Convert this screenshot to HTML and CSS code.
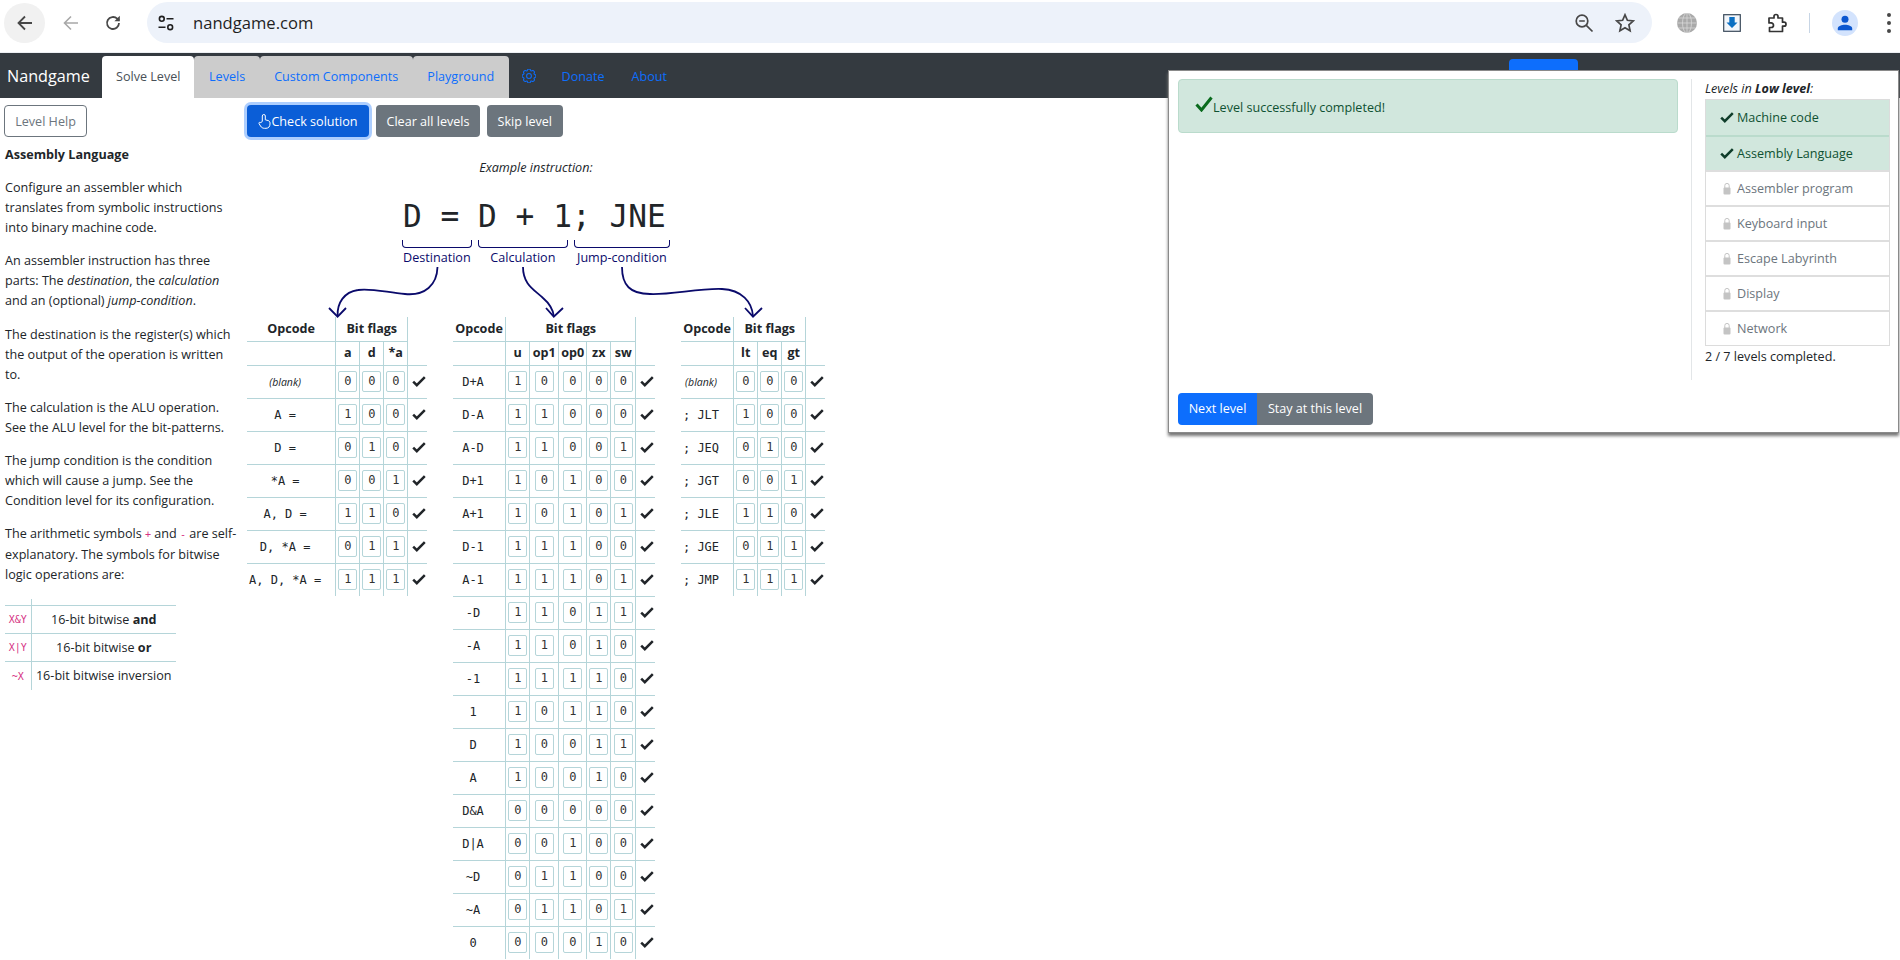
FILE: index.html
```html
<!DOCTYPE html>
<html lang="en">
<head>
    <meta charset="UTF-8">
    <title>Nandgame</title>
    <link rel="stylesheet" href="styles.css">
</head>
<body>
    <svg class="defs" width="0" height="0">
        <symbol id="tick" viewBox="0 0 14 11"><path d="M1.200 5.600 4.800 9.200 12.800 1.200" fill="none" stroke="currentColor" stroke-width="2.500"/></symbol>
        <symbol id="lock" viewBox="0 0 8 13"><path d="M1.800 6V3.600a2.200 2.200 0 0 1 4.400 0V6" fill="none" stroke="currentColor" stroke-width="1"/><rect x="0.500" y="5.500" width="7" height="7" rx="1" fill="currentColor"/></symbol>
    </svg>

    <!-- browser toolbar -->
    <div class="toolbar">
        <button class="round back"><svg width="18" height="18" viewBox="0 0 18 18"><path d="M16 9H3M9 2.500 2.500 9 9 15.500" fill="none" stroke="#474747" stroke-width="1.800"/></svg></button>
        <span class="round"><svg width="18" height="18" viewBox="0 0 18 18"><path d="M16 9H3M9 2.500 2.500 9 9 15.500" fill="none" stroke="#a8a8a8" stroke-width="1.600"/></svg></span>
        <span class="round reload"><svg width="18" height="18" viewBox="0 0 18 18"><path d="M15 9a6 6 0 1 1-1.800-4.300L15 6.500" fill="none" stroke="#474747" stroke-width="1.800"/><path d="M15.800 1.800V7.200H10.400Z" fill="#474747"/></svg></span>
        <div class="omnibox">
            <svg class="tune" width="18" height="18" viewBox="0 0 18 18"><g fill="none" stroke="#1f1f1f" stroke-width="1.600"><circle cx="4.800" cy="4.800" r="2.400"/><circle cx="13.200" cy="13.200" r="2.400"/><path d="M9.500 4.800H16.500M1.500 13.200H8.500"/></g></svg>
            <span class="url">nandgame.com</span>
            <svg class="omni-icon first" width="20" height="20" viewBox="0 0 20 20"><g fill="none" stroke="#474747" stroke-width="1.700"><circle cx="8" cy="8" r="5.800"/><path d="M12.300 12.300 18.500 18.500M5.200 8H10.800"/></g></svg>
            <svg class="omni-icon" width="20" height="20" viewBox="0 0 20 20"><path d="M10 1.800 12.400 7.300 18.300 7.900 13.900 11.900 15.100 17.800 10 14.800 4.900 17.800 6.100 11.900 1.700 7.900 7.600 7.300Z" fill="none" stroke="#474747" stroke-width="1.700"/></svg>
        </div>
        <svg class="ext globe" width="20" height="20" viewBox="0 0 20 20"><circle cx="10" cy="10" r="10" fill="#a9a9a9"/><g fill="none" stroke="#d8d8d8" stroke-width="0.800"><ellipse cx="10" cy="10" rx="4.500" ry="10"/><path d="M0 10H20M1.500 5H18.500M1.500 15H18.500M10 0V20"/></g></svg>
        <svg class="ext" width="18" height="18" viewBox="0 0 18 18"><rect x="0.700" y="0.700" width="16.600" height="16.600" fill="#f2f6fb" stroke="#3a4a5a" stroke-width="1.200"/><path d="M6.300 3H11.700V8.500H14.500L9 14 3.500 8.500H6.300Z" fill="#0b6fc2"/></svg>
        <svg class="ext" width="20" height="20" viewBox="0 0 20 20"><path d="M2 5H7V3.500a2 2 0 0 1 4 0V5H15.500V9.200H17a2 2 0 0 1 0 4H15.500V18.500H2.500V14.500H4.200a2.300 2.300 0 0 0 0-4.600H2Z" fill="none" stroke="#333" stroke-width="1.700" stroke-linejoin="round"/></svg>
        <span class="sep"></span>
        <span class="avatar"><svg width="16" height="16" viewBox="0 0 16 16"><circle cx="8" cy="4.300" r="3.500" fill="#0b57d0"/><path d="M0.800 15.200V13.500C0.800 10.800 5 9.700 8 9.700S15.200 10.800 15.200 13.500V15.200Z" fill="#0b57d0"/></svg></span>
        <span class="dots"><i></i><i></i><i></i></span>
    </div>

    <nav class="topnav">
        <span class="brand">Nandgame</span>
        <div class="tabs">
            <a class="tab active">Solve Level</a>
            <a class="tab">Levels</a>
            <a class="tab">Custom Components</a>
            <a class="tab">Playground</a>
        </div>
        <a class="gear"><svg width="14" height="14" viewBox="0 0 16 16"><g fill="none" stroke="#0d6efd" stroke-width="1.200"><circle cx="8" cy="8" r="2.750"/><path d="M9.796 1.343c-.527-1.790-3.065-1.790-3.592 0l-.094.319a.873.873 0 0 1-1.255.52l-.292-.16c-1.640-.892-3.433.902-2.540 2.541l.159.292a.873.873 0 0 1-.52 1.255l-.319.094c-1.790.527-1.790 3.065 0 3.592l.319.094a.873.873 0 0 1 .52 1.255l-.16.292c-.892 1.640.901 3.434 2.541 2.540l.292-.159a.873.873 0 0 1 1.255.52l.094.319c.527 1.790 3.065 1.790 3.592 0l.094-.319a.873.873 0 0 1 1.255-.52l.292.16c1.640.893 3.434-.902 2.540-2.541l-.159-.292a.873.873 0 0 1 .52-1.255l.319-.094c1.790-.527 1.790-3.065 0-3.592l-.319-.094a.873.873 0 0 1-.52-1.255l.16-.292c.893-1.640-.902-3.433-2.541-2.540l-.292.159a.873.873 0 0 1-1.255-.52z"/></g></svg></a>
        <a class="navlink">Donate</a>
        <a class="navlink">About</a>
        <span class="nav-blue"></span>
    </nav>

    <main class="page">
        <aside class="help">
            <button class="btn btn-outline">Level Help</button>
            <h1>Assembly Language</h1>
            <p>Configure an assembler which translates from symbolic instructions into binary machine code.</p>
            <p>An assembler instruction has three parts: The <em>destination</em>, the <em>calculation</em> and an (optional) <em>jump-condition</em>.</p>
            <p>The destination is the register(s) which the output of the operation is written to.</p>
            <p>The calculation is the ALU operation. See the ALU level for the bit-patterns.</p>
            <p>The jump condition is the condition which will cause a jump. See the Condition level for its configuration.</p>
            <p>The arithmetic symbols <code class="sym">+</code> and <code class="sym">-</code> are self-explanatory. The symbols for bitwise logic operations are:</p>
            <table class="symbols">
                <tr class="spacer"><td></td><td></td></tr>
                <tr><td><code>X&amp;Y</code></td><td>16-bit bitwise <b>and</b></td></tr>
                <tr><td><code>X|Y</code></td><td>16-bit bitwise <b>or</b></td></tr>
                <tr><td><code>~X</code></td><td>16-bit bitwise inversion</td></tr>
            </table>
        </aside>

        <section class="work">
            <div class="actions">
                <button class="btn btn-primary"><svg width="13" height="16" viewBox="0 0 13 16"><path d="M4.300 8.500V3a1.500 1.500 0 0 1 3 0V6.800L10 7.500C11.300 7.900 12 8.700 12 10V11C12 13.500 10.500 15.300 8 15.300H6.500C4.500 15.300 3.500 14.500 2.500 13L1 10.500C.6 9.600 1.800 8.700 2.800 9.600Z" fill="none" stroke="#fff" stroke-width="1"/></svg>Check solution</button>
                <button class="btn btn-gray">Clear all levels</button>
                <button class="btn btn-gray">Skip level</button>
            </div>

            <div class="example">
                <p class="example-title">Example instruction:</p>
                <code class="instruction">D = D + 1; JNE</code>
                <div class="parts">
                    <div class="part dest"><div class="brace"></div>Destination</div>
                    <div class="part calc"><div class="brace"></div>Calculation</div>
                    <div class="part jump"><div class="brace"></div>Jump-condition</div>
                </div>
                <svg class="arrows" width="580" height="182" viewBox="247 137 580 182">
                    <g fill="none" stroke="#0a0a6b" stroke-width="1.800">
                        <path d="M437.500 267C437 285 425 296 405 294C385 292 370 288 358 290C344 292 337 303 337.600 316"/>
                        <path d="M329 308 337.600 316.700 346 308"/>
                        <path d="M523 267C523 285 535 290 543 298C550 304 553 310 553.800 316"/>
                        <path d="M546 308 553.800 316.700 563 308"/>
                        <path d="M622 267C622 285 630 294 650 294C670 295 700 288 722 289C742 290 752 302 753 316"/>
                        <path d="M745 308 753 316.700 762 308"/>
                    </g>
                </svg>
            </div>

            <div class="tables">
                <table class="bits">
                    <tr class="head"><th>Opcode</th><th colspan="3">Bit flags</th><td class="chk"></td></tr>
                    <tr class="sub"><td class="op"></td><th>a</th><th>d</th><th>*a</th><td class="chk"></td></tr>
                    <tr><td class="op blank">(blank)</td><td><span class="bit">0</span></td><td><span class="bit">0</span></td><td><span class="bit">0</span></td><td class="chk"><svg><use href="#tick"/></svg></td></tr>
                    <tr><td class="op">A =</td><td><span class="bit">1</span></td><td><span class="bit">0</span></td><td><span class="bit">0</span></td><td class="chk"><svg><use href="#tick"/></svg></td></tr>
                    <tr><td class="op">D =</td><td><span class="bit">0</span></td><td><span class="bit">1</span></td><td><span class="bit">0</span></td><td class="chk"><svg><use href="#tick"/></svg></td></tr>
                    <tr><td class="op">*A =</td><td><span class="bit">0</span></td><td><span class="bit">0</span></td><td><span class="bit">1</span></td><td class="chk"><svg><use href="#tick"/></svg></td></tr>
                    <tr><td class="op">A, D =</td><td><span class="bit">1</span></td><td><span class="bit">1</span></td><td><span class="bit">0</span></td><td class="chk"><svg><use href="#tick"/></svg></td></tr>
                    <tr><td class="op">D, *A =</td><td><span class="bit">0</span></td><td><span class="bit">1</span></td><td><span class="bit">1</span></td><td class="chk"><svg><use href="#tick"/></svg></td></tr>
                    <tr><td class="op">A, D, *A =</td><td><span class="bit">1</span></td><td><span class="bit">1</span></td><td><span class="bit">1</span></td><td class="chk"><svg><use href="#tick"/></svg></td></tr>
                </table>

                <table class="bits alu">
                    <tr class="head"><th>Opcode</th><th colspan="5">Bit flags</th><td class="chk"></td></tr>
                    <tr class="sub"><td class="op"></td><th>u</th><th>op1</th><th>op0</th><th>zx</th><th>sw</th><td class="chk"></td></tr>
                    <tr><td class="op">D+A</td><td><span class="bit">1</span></td><td><span class="bit">0</span></td><td><span class="bit">0</span></td><td><span class="bit">0</span></td><td><span class="bit">0</span></td><td class="chk"><svg><use href="#tick"/></svg></td></tr>
                    <tr><td class="op">D-A</td><td><span class="bit">1</span></td><td><span class="bit">1</span></td><td><span class="bit">0</span></td><td><span class="bit">0</span></td><td><span class="bit">0</span></td><td class="chk"><svg><use href="#tick"/></svg></td></tr>
                    <tr><td class="op">A-D</td><td><span class="bit">1</span></td><td><span class="bit">1</span></td><td><span class="bit">0</span></td><td><span class="bit">0</span></td><td><span class="bit">1</span></td><td class="chk"><svg><use href="#tick"/></svg></td></tr>
                    <tr><td class="op">D+1</td><td><span class="bit">1</span></td><td><span class="bit">0</span></td><td><span class="bit">1</span></td><td><span class="bit">0</span></td><td><span class="bit">0</span></td><td class="chk"><svg><use href="#tick"/></svg></td></tr>
                    <tr><td class="op">A+1</td><td><span class="bit">1</span></td><td><span class="bit">0</span></td><td><span class="bit">1</span></td><td><span class="bit">0</span></td><td><span class="bit">1</span></td><td class="chk"><svg><use href="#tick"/></svg></td></tr>
                    <tr><td class="op">D-1</td><td><span class="bit">1</span></td><td><span class="bit">1</span></td><td><span class="bit">1</span></td><td><span class="bit">0</span></td><td><span class="bit">0</span></td><td class="chk"><svg><use href="#tick"/></svg></td></tr>
                    <tr><td class="op">A-1</td><td><span class="bit">1</span></td><td><span class="bit">1</span></td><td><span class="bit">1</span></td><td><span class="bit">0</span></td><td><span class="bit">1</span></td><td class="chk"><svg><use href="#tick"/></svg></td></tr>
                    <tr><td class="op">-D</td><td><span class="bit">1</span></td><td><span class="bit">1</span></td><td><span class="bit">0</span></td><td><span class="bit">1</span></td><td><span class="bit">1</span></td><td class="chk"><svg><use href="#tick"/></svg></td></tr>
                    <tr><td class="op">-A</td><td><span class="bit">1</span></td><td><span class="bit">1</span></td><td><span class="bit">0</span></td><td><span class="bit">1</span></td><td><span class="bit">0</span></td><td class="chk"><svg><use href="#tick"/></svg></td></tr>
                    <tr><td class="op">-1</td><td><span class="bit">1</span></td><td><span class="bit">1</span></td><td><span class="bit">1</span></td><td><span class="bit">1</span></td><td><span class="bit">0</span></td><td class="chk"><svg><use href="#tick"/></svg></td></tr>
                    <tr><td class="op">1</td><td><span class="bit">1</span></td><td><span class="bit">0</span></td><td><span class="bit">1</span></td><td><span class="bit">1</span></td><td><span class="bit">0</span></td><td class="chk"><svg><use href="#tick"/></svg></td></tr>
                    <tr><td class="op">D</td><td><span class="bit">1</span></td><td><span class="bit">0</span></td><td><span class="bit">0</span></td><td><span class="bit">1</span></td><td><span class="bit">1</span></td><td class="chk"><svg><use href="#tick"/></svg></td></tr>
                    <tr><td class="op">A</td><td><span class="bit">1</span></td><td><span class="bit">0</span></td><td><span class="bit">0</span></td><td><span class="bit">1</span></td><td><span class="bit">0</span></td><td class="chk"><svg><use href="#tick"/></svg></td></tr>
                    <tr><td class="op">D&amp;A</td><td><span class="bit">0</span></td><td><span class="bit">0</span></td><td><span class="bit">0</span></td><td><span class="bit">0</span></td><td><span class="bit">0</span></td><td class="chk"><svg><use href="#tick"/></svg></td></tr>
                    <tr><td class="op">D|A</td><td><span class="bit">0</span></td><td><span class="bit">0</span></td><td><span class="bit">1</span></td><td><span class="bit">0</span></td><td><span class="bit">0</span></td><td class="chk"><svg><use href="#tick"/></svg></td></tr>
                    <tr><td class="op">~D</td><td><span class="bit">0</span></td><td><span class="bit">1</span></td><td><span class="bit">1</span></td><td><span class="bit">0</span></td><td><span class="bit">0</span></td><td class="chk"><svg><use href="#tick"/></svg></td></tr>
                    <tr><td class="op">~A</td><td><span class="bit">0</span></td><td><span class="bit">1</span></td><td><span class="bit">1</span></td><td><span class="bit">0</span></td><td><span class="bit">1</span></td><td class="chk"><svg><use href="#tick"/></svg></td></tr>
                    <tr><td class="op">0</td><td><span class="bit">0</span></td><td><span class="bit">0</span></td><td><span class="bit">0</span></td><td><span class="bit">1</span></td><td><span class="bit">0</span></td><td class="chk"><svg><use href="#tick"/></svg></td></tr>
                </table>

                <table class="bits">
                    <tr class="head"><th>Opcode</th><th colspan="3">Bit flags</th><td class="chk"></td></tr>
                    <tr class="sub"><td class="op"></td><th>lt</th><th>eq</th><th>gt</th><td class="chk"></td></tr>
                    <tr><td class="op blank">(blank)</td><td><span class="bit">0</span></td><td><span class="bit">0</span></td><td><span class="bit">0</span></td><td class="chk"><svg><use href="#tick"/></svg></td></tr>
                    <tr><td class="op">; JLT</td><td><span class="bit">1</span></td><td><span class="bit">0</span></td><td><span class="bit">0</span></td><td class="chk"><svg><use href="#tick"/></svg></td></tr>
                    <tr><td class="op">; JEQ</td><td><span class="bit">0</span></td><td><span class="bit">1</span></td><td><span class="bit">0</span></td><td class="chk"><svg><use href="#tick"/></svg></td></tr>
                    <tr><td class="op">; JGT</td><td><span class="bit">0</span></td><td><span class="bit">0</span></td><td><span class="bit">1</span></td><td class="chk"><svg><use href="#tick"/></svg></td></tr>
                    <tr><td class="op">; JLE</td><td><span class="bit">1</span></td><td><span class="bit">1</span></td><td><span class="bit">0</span></td><td class="chk"><svg><use href="#tick"/></svg></td></tr>
                    <tr><td class="op">; JGE</td><td><span class="bit">0</span></td><td><span class="bit">1</span></td><td><span class="bit">1</span></td><td class="chk"><svg><use href="#tick"/></svg></td></tr>
                    <tr><td class="op">; JMP</td><td><span class="bit">1</span></td><td><span class="bit">1</span></td><td><span class="bit">1</span></td><td class="chk"><svg><use href="#tick"/></svg></td></tr>
                </table>
            </div>
        </section>
    </main>

    <!-- popup shown after the level is solved -->
    <div class="popup">
        <div class="popup-body">
            <div class="popup-main">
                <div class="alert"><svg width="18" height="16" viewBox="0 0 18 16"><path d="M1.500 8.500 6.500 14 16.500 1.500" fill="none" stroke="#0a6b1d" stroke-width="3"/></svg>Level successfully completed!</div>
                <div class="choices">
                    <button class="btn btn-next">Next level</button><button class="btn btn-stay">Stay at this level</button>
                </div>
            </div>
            <div class="popup-side">
                <div class="side-inner">
                    <div class="side-title"><em>Levels in <b>Low level</b>:</em></div>
                    <ul class="levels">
                        <li class="done"><svg class="ico-tick"><use href="#tick"/></svg>Machine code</li>
                        <li class="done"><svg class="ico-tick"><use href="#tick"/></svg>Assembly Language</li>
                        <li><svg class="ico-lock"><use href="#lock"/></svg>Assembler program</li>
                        <li><svg class="ico-lock"><use href="#lock"/></svg>Keyboard input</li>
                        <li><svg class="ico-lock"><use href="#lock"/></svg>Escape Labyrinth</li>
                        <li><svg class="ico-lock"><use href="#lock"/></svg>Display</li>
                        <li><svg class="ico-lock"><use href="#lock"/></svg>Network</li>
                    </ul>
                    <div class="progress">2 / 7 levels completed.</div>
                </div>
            </div>
        </div>
    </div>
</body>
</html>
```

FILE: styles.css
```css
* {
    box-sizing: border-box;
}

html, body {
    height: 960px;
    overflow: hidden;
}

body {
    margin: 0;
    background-color: white;
    color: #212529;
    font-family: "Open Sans", "Noto Sans", sans-serif;
    font-size: 12.6px;
    line-height: 20px;
    position: relative;
}

.defs {
    position: absolute;
}

code {
    font-family: "DejaVu Sans Mono", monospace;
}

/* browser toolbar */
.toolbar {
    height: 53px;
    display: flex;
    align-items: center;
    padding: 0 0 7px 4px;
    border-bottom: 1px solid #eceff3;
}

.round {
    width: 41px;
    height: 40px;
    margin-right: 5px;
    display: flex;
    align-items: center;
    justify-content: center;
    border: none;
    border-radius: 50%;
    background: transparent;
    padding: 0;
}

.back {
    background: #f1f1f1;
}

.reload {
    margin-left: -4px;
}

.omnibox {
    width: 1505px;
    height: 41px;
    margin-left: 9px;
    display: flex;
    align-items: center;
    padding: 0 17px 0 10px;
    border-radius: 21px;
    background: #edf2fa;
}

.tune {
    margin-right: 18px;
}

.url {
    font-size: 16.600px;
    color: #1f1f1f;
    flex: 1;
}

.omni-icon {
    margin-left: 21px;
}

.ext {
    margin-left: 26px;
    flex: none;
}

.globe {
    margin-left: 25px;
}

.sep {
    width: 1px;
    height: 20px;
    margin-left: 22px;
    background: #c7d5e5;
}

.avatar {
    width: 26px;
    height: 26px;
    margin-left: 22px;
    display: flex;
    align-items: center;
    justify-content: center;
    border-radius: 50%;
    background: #d3e3fd;
}

.dots {
    margin-left: 29px;
    display: flex;
    flex-direction: column;
    gap: 4px;
}

.dots i {
    width: 4px;
    height: 4px;
    border-radius: 50%;
    background: #474747;
}

/* site navigation */
.topnav {
    height: 45px;
    display: flex;
    align-items: flex-end;
    background: #343a40;
    position: relative;
}

.brand {
    width: 102px;
    padding-left: 7px;
    align-self: center;
    color: white;
    font-size: 16.200px;
}

.tabs {
    display: flex;
    height: 42px;
}

.tab {
    height: 42px;
    padding: 0 14.500px;
    display: flex;
    align-items: center;
    background: #cccccc;
    color: #0d6efd;
    border-radius: 4px 4px 0 0;
}

.tab.active {
    background: white;
    color: #495057;
    padding: 0 14px;
}

.gear {
    margin-left: 13px;
    align-self: center;
    height: 14px;
    line-height: 0;
    margin-top: 1px;
}

.navlink {
    align-self: center;
    padding: 0 13.500px;
    color: #0d6efd;
    margin-top: 2px;
}

.gear + .navlink {
    margin-left: 13px;
    padding-left: 13px;
}

.nav-blue {
    position: absolute;
    left: 1509px;
    top: 6px;
    width: 69px;
    height: 14px;
    border-radius: 4px 4px 0 0;
    background: #0d6efd;
}

/* page body */
.page {
    display: flex;
    padding: 7px 0 0 5px;
    height: 862px;
}

.help {
    width: 242px;
    flex: none;
    padding-right: 8px;
}

.help h1 {
    margin: 8px 0 13px;
    font-size: 12.6px;
    font-weight: 700;
    line-height: 20px;
}

.help p {
    margin: 0 0 13.300px;
}

.sym {
    color: #d63384;
    font-size: 10px;
}

.btn {
    height: 32px;
    padding: 1px 10px 0;
    border: 1px solid transparent;
    border-radius: 4px;
    font-family: inherit;
    font-size: 12.6px;
    line-height: 20px;
}

.btn-outline {
    margin-left: -1px;
    width: 83px;
    background: white;
    border-color: #6c757d;
    color: #6c757d;
}

.btn-primary {
    width: 122px;
    padding: 1px 8px 0;
    background: #0b5ed7;
    color: white;
    box-shadow: 0 0 0 3px rgba(49, 132, 253, 0.4);
}

.btn-primary svg {
    vertical-align: -3px;
}

.btn-gray {
    padding: 1px 9.500px 0;
    background: #6c757d;
    color: white;
}

.symbols {
    border-collapse: collapse;
    width: 171px;
    text-align: center;
}

.symbols td {
    height: 28px;
    padding: 0 3px;
}

.symbols tr + tr td {
    border-top: 1px solid #b5d5d9;
}

.symbols td + td {
    border-left: 1px solid #b5d5d9;
}

.symbols td:first-child {
    width: 26px;
    padding: 0;
}

.symbols .spacer td {
    height: 7px;
    padding: 0;
}

.symbols code {
    font-size: 10px;
    color: #d63384;
}

.work {
    flex: none;
}

.actions {
    display: flex;
    gap: 7px;
}

.example {
    height: 180px;
    position: relative;
    text-align: center;
}

.example-title {
    margin: 0;
    padding-top: 21px;
    font-style: italic;
}

.instruction {
    display: block;
    margin-top: 18px;
    padding-right: 3px;
    height: 40px;
    line-height: 40px;
    font-size: 31.200px;
    color: #212529;
}

.parts {
    margin-top: 4px;
    display: flex;
    justify-content: center;
    gap: 6px;
    color: #0a0a6b;
}

.part {
    flex: none;
}

.dest {
    width: 70px;
}

.calc {
    width: 90px;
}

.jump {
    width: 96px;
}

.brace {
    height: 8px;
    border: 1.500px solid #0a0a6b;
    border-top: none;
    border-radius: 0 0 4px 4px;
}

.arrows {
    position: absolute;
    left: 0;
    top: 0;
    pointer-events: none;
}

/* the bit tables */
.tables {
    display: flex;
    align-items: flex-start;
    gap: 26px;
}

.bits {
    border-collapse: collapse;
    text-align: center;
}

.bits td, .bits th {
    height: 33px;
    padding: 0 2px;
    font-weight: 700;
}

.bits td {
    font-weight: 400;
}

.bits td + td, .bits th + th, .bits th + td, .bits td + th {
    border-left: 1px solid #b5d5d9;
}

.bits tr + tr td, .bits tr + tr th {
    border-top: 1px solid #b5d5d9;
}

.bits .head th, .bits .head td {
    height: 24px;
    padding-top: 1px;
}

.bits .head th:first-child {
    width: 53px;
}

.bits .sub th, .bits .sub td {
    height: 24px;
}

.bits .sub th {
    width: 24px;
}

.alu .sub th:nth-child(3) {
    width: 29px;
}

.alu .sub th:nth-child(4) {
    width: 28px;
}

.alu .sub th:nth-child(6) {
    width: 25px;
}

.bits .sub .chk {
    border-top: none;
}

.bits td.op {
    padding: 0 14px 0 2px;
    font-family: "DejaVu Sans Mono", monospace;
    font-size: 12px;
    white-space: pre;
}

.bits td.blank {
    font-family: inherit;
    font-size: 10.500px;
    font-style: italic;
}

.bit {
    display: block;
    width: 19px;
    height: 21px;
    margin: 0 auto;
    border: 1px solid #b5d5d9;
    border-radius: 2px;
    font-family: "DejaVu Sans Mono", monospace;
    font-size: 12px;
    line-height: 19px;
    color: #333;
}

.bits td.chk {
    width: 19px;
    min-width: 19px;
    padding: 0 0 0 4px;
    color: #212529;
    text-align: left;
}

.chk svg {
    display: block;
    width: 14px;
    height: 11px;
}

/* popup */
.popup {
    position: absolute;
    left: 1168px;
    top: 70px;
    width: 731px;
    height: 363px;
    background: white;
    border: 1px solid #8a8a8a;
    box-shadow: 0 3px 3px #777;
}

.popup-body {
    display: flex;
    height: 100%;
    padding: 8px 8px 0 9px;
}

.popup-main {
    width: 500px;
    flex: none;
}

.alert {
    height: 54px;
    padding: 18px 15px 0 16px;
    background: #d1e7dd;
    border: 1px solid #badbcc;
    border-radius: 4px;
    color: #0f5132;
    display: flex;
    align-items: flex-start;
}

.alert svg {
    flex: none;
    margin-top: -2px;
}

.choices {
    margin-top: 260px;
    display: flex;
}

.btn-next {
    background: #0d6efd;
    color: white;
    width: 79px;
    padding: 0;
    border-radius: 4px 0 0 4px;
}

.btn-stay {
    background: #6c757d;
    color: white;
    width: 116px;
    padding: 0;
    border-radius: 0 4px 4px 0;
}

.popup-side {
    margin-left: 13px;
    flex: 1;
}

.side-inner {
    height: 301px;
    padding-left: 13px;
    border-left: 1px solid #e3e6e8;
}

.side-title {
    height: 20px;
}

.levels {
    list-style: none;
    margin: 0;
    padding: 0;
    border: 1px solid #dcdcdc;
}

.levels li {
    height: 35px;
    padding-left: 14px;
    display: flex;
    align-items: center;
    color: #6c757d;
}

.levels li + li {
    border-top: 2px solid #dedede;
}

.levels li.done {
    background: #d1e7dd;
    border-color: #badbcc;
    color: #0f5132;
}

.ico-tick {
    width: 14px;
    height: 11px;
    margin-right: 3px;
    color: #0f3d2a;
}

.ico-lock {
    width: 8px;
    height: 13px;
    margin: 0 6px 0 3px;
    color: #c4c4c4;
}

.progress {
    margin-top: 1px;
}
```
